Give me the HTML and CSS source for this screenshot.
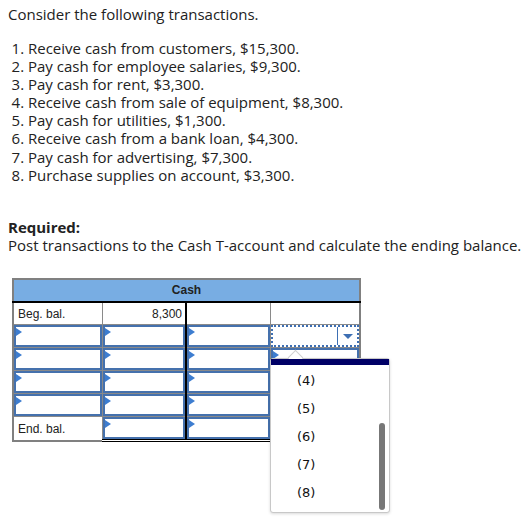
FILE: index.html
```html
<!DOCTYPE html>
<html>
<head>
<meta charset="utf-8">
<link rel="stylesheet" href="styles.css">
</head>
<body>
<p class="intro">Consider the following transactions.</p>
<ol class="list">
<li>Receive cash from customers, $15,300.</li>
<li>Pay cash for employee salaries, $9,300.</li>
<li>Pay cash for rent, $3,300.</li>
<li>Receive cash from sale of equipment, $8,300.</li>
<li>Pay cash for utilities, $1,300.</li>
<li>Receive cash from a bank loan, $4,300.</li>
<li>Pay cash for advertising, $7,300.</li>
<li>Purchase supplies on account, $3,300.</li>
</ol>
<p class="req"><b>Required:</b><br>Post transactions to the Cash T-account and calculate the ending balance.</p>
<div class="wrap">
<table class="tacct">
<colgroup><col class="c1"><col class="c2"><col class="c3"><col class="c4"></colgroup>
<tr><th colspan="4">Cash</th></tr>
<tr class="beg"><td class="lbl">Beg. bal.</td><td class="num tline">8,300</td><td></td><td></td></tr>
<tr><td><div class="inp"></div></td><td class="tline"><div class="inp"></div></td><td><div class="inp"></div></td><td><div class="sel"><span class="arrow"></span></div></td></tr>
<tr><td><div class="inp"></div></td><td class="tline"><div class="inp"></div></td><td><div class="inp"></div></td><td><div class="inp"></div></td></tr>
<tr><td><div class="inp"></div></td><td class="tline"><div class="inp"></div></td><td><div class="inp"></div></td><td><div class="inp"></div></td></tr>
<tr><td><div class="inp"></div></td><td class="tline"><div class="inp"></div></td><td><div class="inp"></div></td><td><div class="inp"></div></td></tr>
<tr class="end"><td class="lbl">End. bal.</td><td class="tline dbl"><div class="inp"></div></td><td class="dbl"><div class="inp"></div></td><td></td></tr>
</table>
<div class="popup">
<span class="caret"></span>
<div class="bar"></div>
<ul class="opts">
<li>(4)</li>
<li>(5)</li>
<li>(6)</li>
<li>(7)</li>
<li>(8)</li>
</ul>
<span class="scroll"></span>
</div>
</div>
</body>
</html>
```
FILE: styles.css
```css
body {
  margin: 5px 8px 8px;
  font-family: "Open Sans", "Liberation Sans", sans-serif;
  font-size: 15px;
  color: #222;
  background: #fff;
}
.intro {
  margin: 0;
  line-height: 18px;
}
.list {
  margin: 16px 0 0;
  padding: 0 0 0 20px;
  line-height: 18.1px;
}
.list li { padding-left: 0; }
.req {
  margin: 34px 0 0;
  line-height: 18px;
}
.wrap {
  position: relative;
  margin-top: 24px;
  margin-left: 4px;
  height: 240px;
}
.tacct {
  border-collapse: collapse;
  table-layout: fixed;
  width: 347px;
  font-family: "Liberation Sans", Arial, sans-serif;
  font-size: 12px;
  color: #222;
}
.c1 { width: 89px; }
.c2 { width: 84px; }
.c3 { width: 84px; }
.c4 { width: 90px; }
.tacct th {
  height: 21px;
  background: #78ade3;
  border: 2px solid #808080;
  border-bottom: 2px solid #000;
  font-weight: bold;
  text-align: center;
  padding: 0;
}
.tacct td {
  height: 23px;
  padding: 0;
  border: 1px solid #8a8a8a;
  vertical-align: middle;
  box-sizing: border-box;
}
.tacct tr td:first-child { border-left: 2px solid #808080; }
.tacct tr td:last-child { border-right: 2px solid #808080; }
.tacct .tline { border-right: 2px solid #000; }
.tacct .lbl { padding-left: 4px; }
.tacct .num { text-align: right; padding-right: 3px; }
.tacct .end td { border-bottom: 2px solid #808080; }
.tacct .end td.dbl { border-bottom: 3px double #000; }
.inp {
  position: relative;
  height: 22px;
  box-sizing: border-box;
  border: 2px solid #4571ad;
  background: #fff;
}
.inp::before {
  content: "";
  position: absolute;
  left: 0;
  top: 1px;
  border-left: 6px solid #3d7dd0;
  border-top: 4px solid transparent;
  border-bottom: 4px solid transparent;
}
.sel {
  position: relative;
  height: 22px;
  box-sizing: border-box;
  border: 2px dotted #3d6fb3;
}
.sel .arrow {
  position: absolute;
  right: 0;
  top: 0;
  bottom: 0;
  width: 19px;
  border-left: 1px solid #3d6fb3;
}
.sel .arrow::after {
  content: "";
  position: absolute;
  left: 5px;
  top: 7px;
  border-top: 5px solid #3d6fb3;
  border-left: 5px solid transparent;
  border-right: 5px solid transparent;
}
.popup {
  position: absolute;
  left: 258px;
  top: 80px;
  width: 118px;
  height: 153px;
  background: #fff;
  border: 1px solid #c8c8c8;
  border-radius: 3px;
  box-shadow: 0 1px 3px rgba(0,0,0,0.15);
}
.caret {
  position: absolute;
  left: 19px;
  top: -7px;
  width: 10px;
  height: 10px;
  background: #fff;
  border-left: 1px solid #d0d0d0;
  border-top: 1px solid #d0d0d0;
  transform: rotate(45deg);
}
.bar {
  position: relative;
  height: 6px;
  background: #000066;
}
.opts {
  list-style: none;
  margin: 0;
  padding: 6px 0 0 26px;
  font-family: "DejaVu Sans", sans-serif;
  font-size: 13px;
  color: #111;
}
.opts li {
  height: 28px;
  line-height: 20px;
}
.scroll {
  position: absolute;
  right: 4px;
  top: 64px;
  width: 6px;
  height: 87px;
  border-radius: 3px;
  background: #777;
}
```
